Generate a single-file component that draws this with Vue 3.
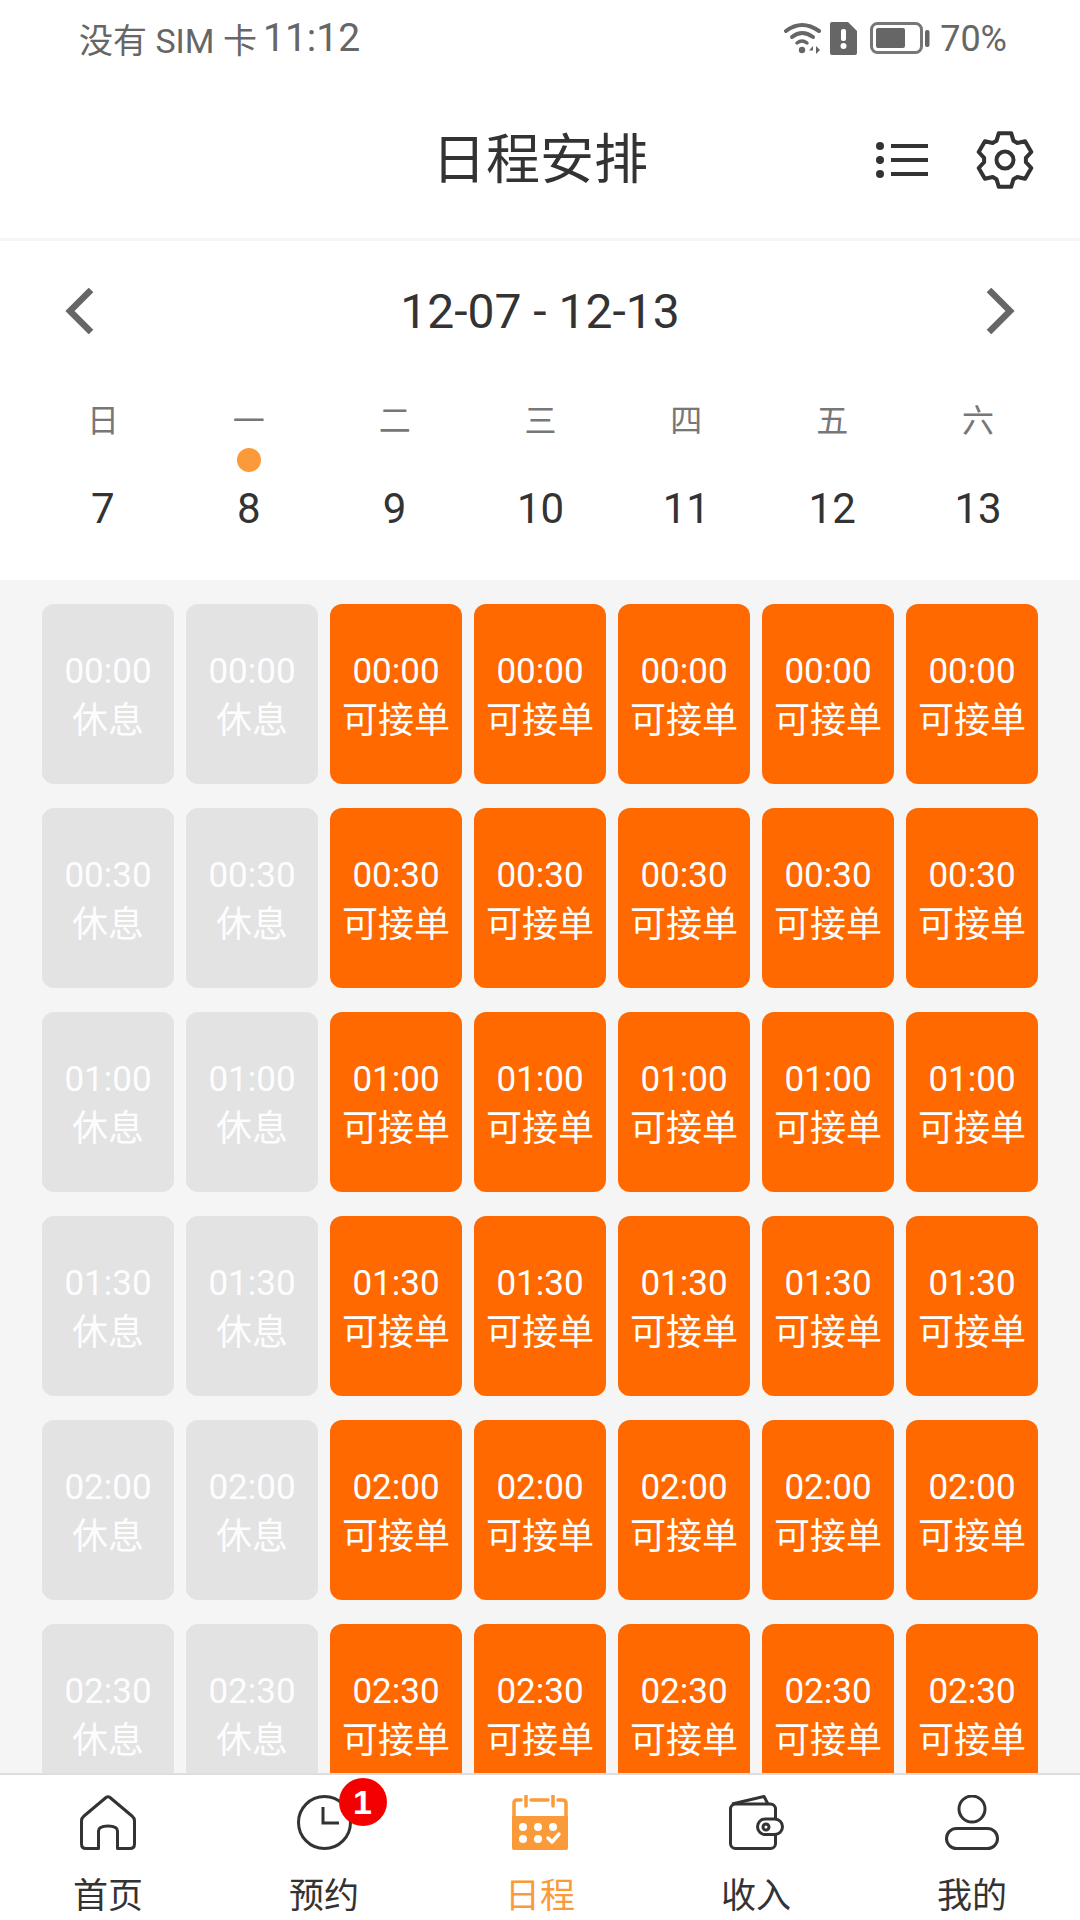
<template>
  <div class="page">
    <div class="status-bar">
      <div class="status-left">
        <span class="carrier">没有 SIM 卡</span>
        <span class="clock">11:12</span>
      </div>
      <div class="status-right">
        <svg class="ic-wifi" width="37" height="33" viewBox="0 0 37 33" fill="none" stroke="#666" stroke-linecap="round">
          <path d="M2 9 Q18 -3 35 9" stroke-width="4" />
          <path d="M8 15 Q18 7 29 15" stroke-width="4" />
          <path d="M13 21 Q18 17 23 21" stroke-width="3.5" />
          <circle cx="18" cy="28" r="3.2" fill="#666" stroke="none" />
          <path d="M29 24 L25 28.5 H29 Z M32 24 V32 L36 28 Z" fill="#666" stroke="none" />
        </svg>
        <svg class="ic-sim" width="27" height="33" viewBox="0 0 27 33">
          <path d="M2 0 H18 L27 9 V31 Q27 33 25 33 H2 Q0 33 0 31 V2 Q0 0 2 0 Z" fill="#666" />
          <rect x="11" y="7" width="5" height="12" rx="2" fill="#fff" />
          <circle cx="13.5" cy="24" r="3" fill="#fff" />
        </svg>
        <svg class="ic-battery" width="60" height="32" viewBox="0 0 60 32">
          <rect x="1.5" y="1.5" width="50" height="29" rx="6" fill="none" stroke="#777" stroke-width="3" />
          <rect x="6" y="6" width="29" height="20" rx="2" fill="#666" />
          <rect x="55" y="8" width="4.5" height="17" rx="2" fill="#666" />
        </svg>
        <span class="percent">70%</span>
      </div>
    </div>

    <header class="top-bar">
      <h1>日程安排</h1>
      <svg class="ic-list" width="52" height="36" viewBox="0 0 52 36">
        <circle cx="4" cy="4" r="4" fill="#333" />
        <circle cx="4" cy="18" r="4" fill="#333" />
        <circle cx="4" cy="32" r="4" fill="#333" />
        <rect x="15" y="2" width="37" height="4" fill="#333" />
        <rect x="15" y="16" width="37" height="4" fill="#333" />
        <rect x="15" y="30" width="37" height="4" fill="#333" />
      </svg>
      <svg class="ic-gear" width="60" height="60" viewBox="0 0 60 60" fill="none" stroke="#333" stroke-width="4" stroke-linejoin="round">
        <path :d="gearPath" />
        <circle cx="30" cy="30" r="8.5" />
      </svg>
    </header>

    <section class="calendar">
      <div class="range">
        <svg width="30" height="46" viewBox="0 0 30 46" fill="none" stroke="#666" stroke-width="6.5">
          <path d="M27 2 L6 23 L27 44" />
        </svg>
        <span>12-07 - 12-13</span>
        <svg width="30" height="46" viewBox="0 0 30 46" fill="none" stroke="#666" stroke-width="6.5">
          <path d="M3 2 L24 23 L3 44" />
        </svg>
      </div>
      <div class="week">
        <div v-for="d in days" :key="d.num" class="day">
          <span class="day-name">{{ d.name }}</span>
          <span class="dot-slot"><i v-if="d.mark" class="dot"></i></span>
          <span class="day-num">{{ d.num }}</span>
        </div>
      </div>
    </section>

    <main class="slots">
      <template v-for="t in times" :key="t">
        <div v-for="n in 7" :key="t + n" class="slot" :class="{ off: n < 3 }">
          <span class="slot-time">{{ t }}</span>
          <span class="slot-label">{{ n < 3 ? '休息' : '可接单' }}</span>
        </div>
      </template>
    </main>

    <nav class="tabs">
      <div class="tab">
        <svg class="tab-icon" width="56" height="55" viewBox="0 0 56 55" fill="none" stroke="#333" stroke-width="3" stroke-linejoin="round">
          <path d="M26 2.5 Q28 1 30 2.5 L52 21 Q54.5 23 54.5 26 V49 Q54.5 53.5 50 53.5 H37.5 V36 Q37.5 31 28 31 Q18.5 31 18.5 36 V53.5 H6 Q1.5 53.5 1.5 49 V26 Q1.5 23 4 21 Z" />
        </svg>
        <span>首页</span>
      </div>
      <div class="tab">
        <div class="icon-wrap">
          <svg class="tab-icon" width="55" height="55" viewBox="0 0 55 55" fill="none" stroke="#333" stroke-width="3">
            <circle cx="27.5" cy="27.5" r="26" />
            <path d="M26 12 V28 H42" />
          </svg>
          <b class="badge">1</b>
        </div>
        <span>预约</span>
      </div>
      <div class="tab active">
        <svg class="tab-icon" width="56" height="55" viewBox="0 0 56 55" fill="none">
          <path d="M0 21 H56 V53 Q56 55 54 55 H2 Q0 55 0 53 Z" fill="#fa9a38" />
          <g stroke="#fa9a38" stroke-width="3.5" stroke-linecap="round">
            <path d="M2 22 V8 Q2 5 5 5 H9" />
            <path d="M19 5 H36" />
            <path d="M46 5 H50 Q54 5 54 8 V22" />
            <path d="M14 1 V11" />
            <path d="M41 1 V11" />
          </g>
          <g fill="#fff">
            <circle cx="11" cy="32" r="4" />
            <circle cx="26" cy="32" r="4" />
            <circle cx="41" cy="32" r="4" />
            <circle cx="11" cy="44" r="4" />
            <circle cx="26" cy="44" r="4" />
          </g>
          <path d="M36 43 L40 47 L47 39" stroke="#fff" stroke-width="3.5" stroke-linecap="round" stroke-linejoin="round" />
        </svg>
        <span>日程</span>
      </div>
      <div class="tab">
        <svg class="tab-icon" width="55" height="55" viewBox="0 0 55 55" fill="none" stroke="#333" stroke-width="3" stroke-linejoin="round">
          <path d="M3 9 L35 1.5 L39 9" />
          <rect x="1.5" y="9" width="45" height="44.5" rx="5" />
          <rect x="28.5" y="24" width="25" height="15.5" rx="7.7" fill="#fff" />
          <circle cx="37" cy="32" r="3" />
        </svg>
        <span>收入</span>
      </div>
      <div class="tab">
        <svg class="tab-icon" width="54" height="55" viewBox="0 0 54 55" fill="none" stroke="#333" stroke-width="3">
          <circle cx="27" cy="14" r="13" />
          <rect x="1.5" y="33.5" width="51" height="20" rx="10" />
        </svg>
        <span>我的</span>
      </div>
    </nav>
  </div>
</template>

<script setup>
const days = [
  { name: '日', num: 7 },
  { name: '一', num: 8, mark: true },
  { name: '二', num: 9 },
  { name: '三', num: 10 },
  { name: '四', num: 11 },
  { name: '五', num: 12 },
  { name: '六', num: 13 }
]

const times = ['00:00', '00:30', '01:00', '01:30', '02:00', '02:30']

// six teeth, one pointing straight up
const gearPath = (() => {
  const pts = []
  for (let i = 0; i < 6; i++) {
    const a = (i * 60 - 90) * Math.PI / 180
    const at = (r, off) => {
      const t = a + off * Math.PI / 180
      return (30 + r * Math.cos(t)).toFixed(1) + ' ' + (30 + r * Math.sin(t)).toFixed(1)
    }
    pts.push(at(21, -24), at(27.5, -13), at(27.5, 13), at(21, 24))
  }
  return 'M' + pts.join(' L') + ' Z'
})()
</script>

<style scoped>
.page {
  width: 1080px;
  height: 1920px;
  display: flex;
  flex-direction: column;
  overflow: hidden;
  background: #fff;
  font-family: Roboto, "Noto Sans CJK SC", sans-serif;
  color: #333;
}

.status-bar {
  height: 76px;
  flex: none;
  display: flex;
  justify-content: space-between;
  align-items: center;
  padding: 0 73px 0 79px;
  box-sizing: border-box;
  color: #666;
}

.status-left {
  display: flex;
  align-items: center;
  gap: 6px;
}

.carrier {
  font-size: 34px;
}

.clock {
  font-size: 39px;
}

.status-right {
  display: flex;
  align-items: center;
}

.ic-sim {
  margin-left: 9px;
}

.ic-battery {
  margin-left: 13px;
}

.percent {
  font-size: 36px;
  margin-left: 10px;
  padding-top: 2px;
}

.top-bar {
  height: 162px;
  flex: none;
  position: relative;
  display: flex;
  align-items: center;
  justify-content: center;
  border-bottom: 3px solid #f5f5f5;
  box-sizing: content-box;
}

.top-bar h1 {
  margin: 0 0 3px;
  font-size: 54px;
  font-weight: 400;
}

.ic-list {
  position: absolute;
  left: 876px;
  top: 66px;
}

.ic-gear {
  position: absolute;
  left: 975px;
  top: 54px;
}

.calendar {
  height: 339px;
  flex: none;
}

.range {
  height: 60px;
  margin-top: 40px;
  padding: 0 64px 0 64px;
  display: flex;
  justify-content: space-between;
  align-items: center;
  font-size: 48px;
}

.week {
  margin-top: 58px;
  padding: 0 29px 0 30px;
  display: grid;
  grid-template-columns: repeat(7, 1fr);
}

.day {
  display: flex;
  flex-direction: column;
  align-items: center;
}

.day-name {
  height: 44px;
  line-height: 44px;
  font-size: 32px;
  color: #777;
}

.dot-slot {
  height: 32px;
  padding-top: 1px;
  display: flex;
  align-items: center;
}

.dot {
  width: 24px;
  height: 24px;
  border-radius: 50%;
  background: #fa9a38;
}

.day-num {
  height: 66px;
  line-height: 66px;
  font-size: 42px;
}

.slots {
  flex: 1;
  min-height: 0;
  overflow: hidden;
  background: #f5f5f5;
  padding: 24px 42px;
  display: grid;
  grid-template-columns: repeat(7, 132px);
  grid-auto-rows: 180px;
  gap: 24px 12px;
}

.slot {
  border-radius: 12px;
  background: #ff6900;
  color: #fff;
  display: flex;
  flex-direction: column;
  align-items: center;
  justify-content: center;
  padding-top: 5px;
  box-sizing: border-box;
}

.slot.off {
  background: #e3e3e3;
  color: #fdfdfd;
}

.slot-time {
  font-size: 35px;
  line-height: 48px;
}

.slot-label {
  font-size: 36px;
  line-height: 50px;
}

.tabs {
  height: 147px;
  flex: none;
  box-sizing: border-box;
  border-top: 2px solid #ddd;
  padding-top: 20px;
  background: #fff;
  display: grid;
  grid-template-columns: repeat(5, 1fr);
}

.tab {
  display: flex;
  flex-direction: column;
  align-items: center;
  font-size: 35px;
  line-height: 46px;
}

.tab-icon {
  display: block;
  height: 55px;
}

.tab > span {
  margin-top: 24px;
}

.tab.active {
  color: #fa9a38;
}

.icon-wrap {
  position: relative;
}

.badge {
  position: absolute;
  left: 42px;
  top: -17px;
  width: 48px;
  height: 48px;
  border-radius: 50%;
  background: #f50000;
  color: #fff;
  font-family: "Liberation Sans", sans-serif;
  font-size: 34px;
  font-weight: 700;
  line-height: 48px;
  text-align: center;
}
</style>

<style>
html,
body {
  margin: 0;
  background: #fff;
}
</style>
